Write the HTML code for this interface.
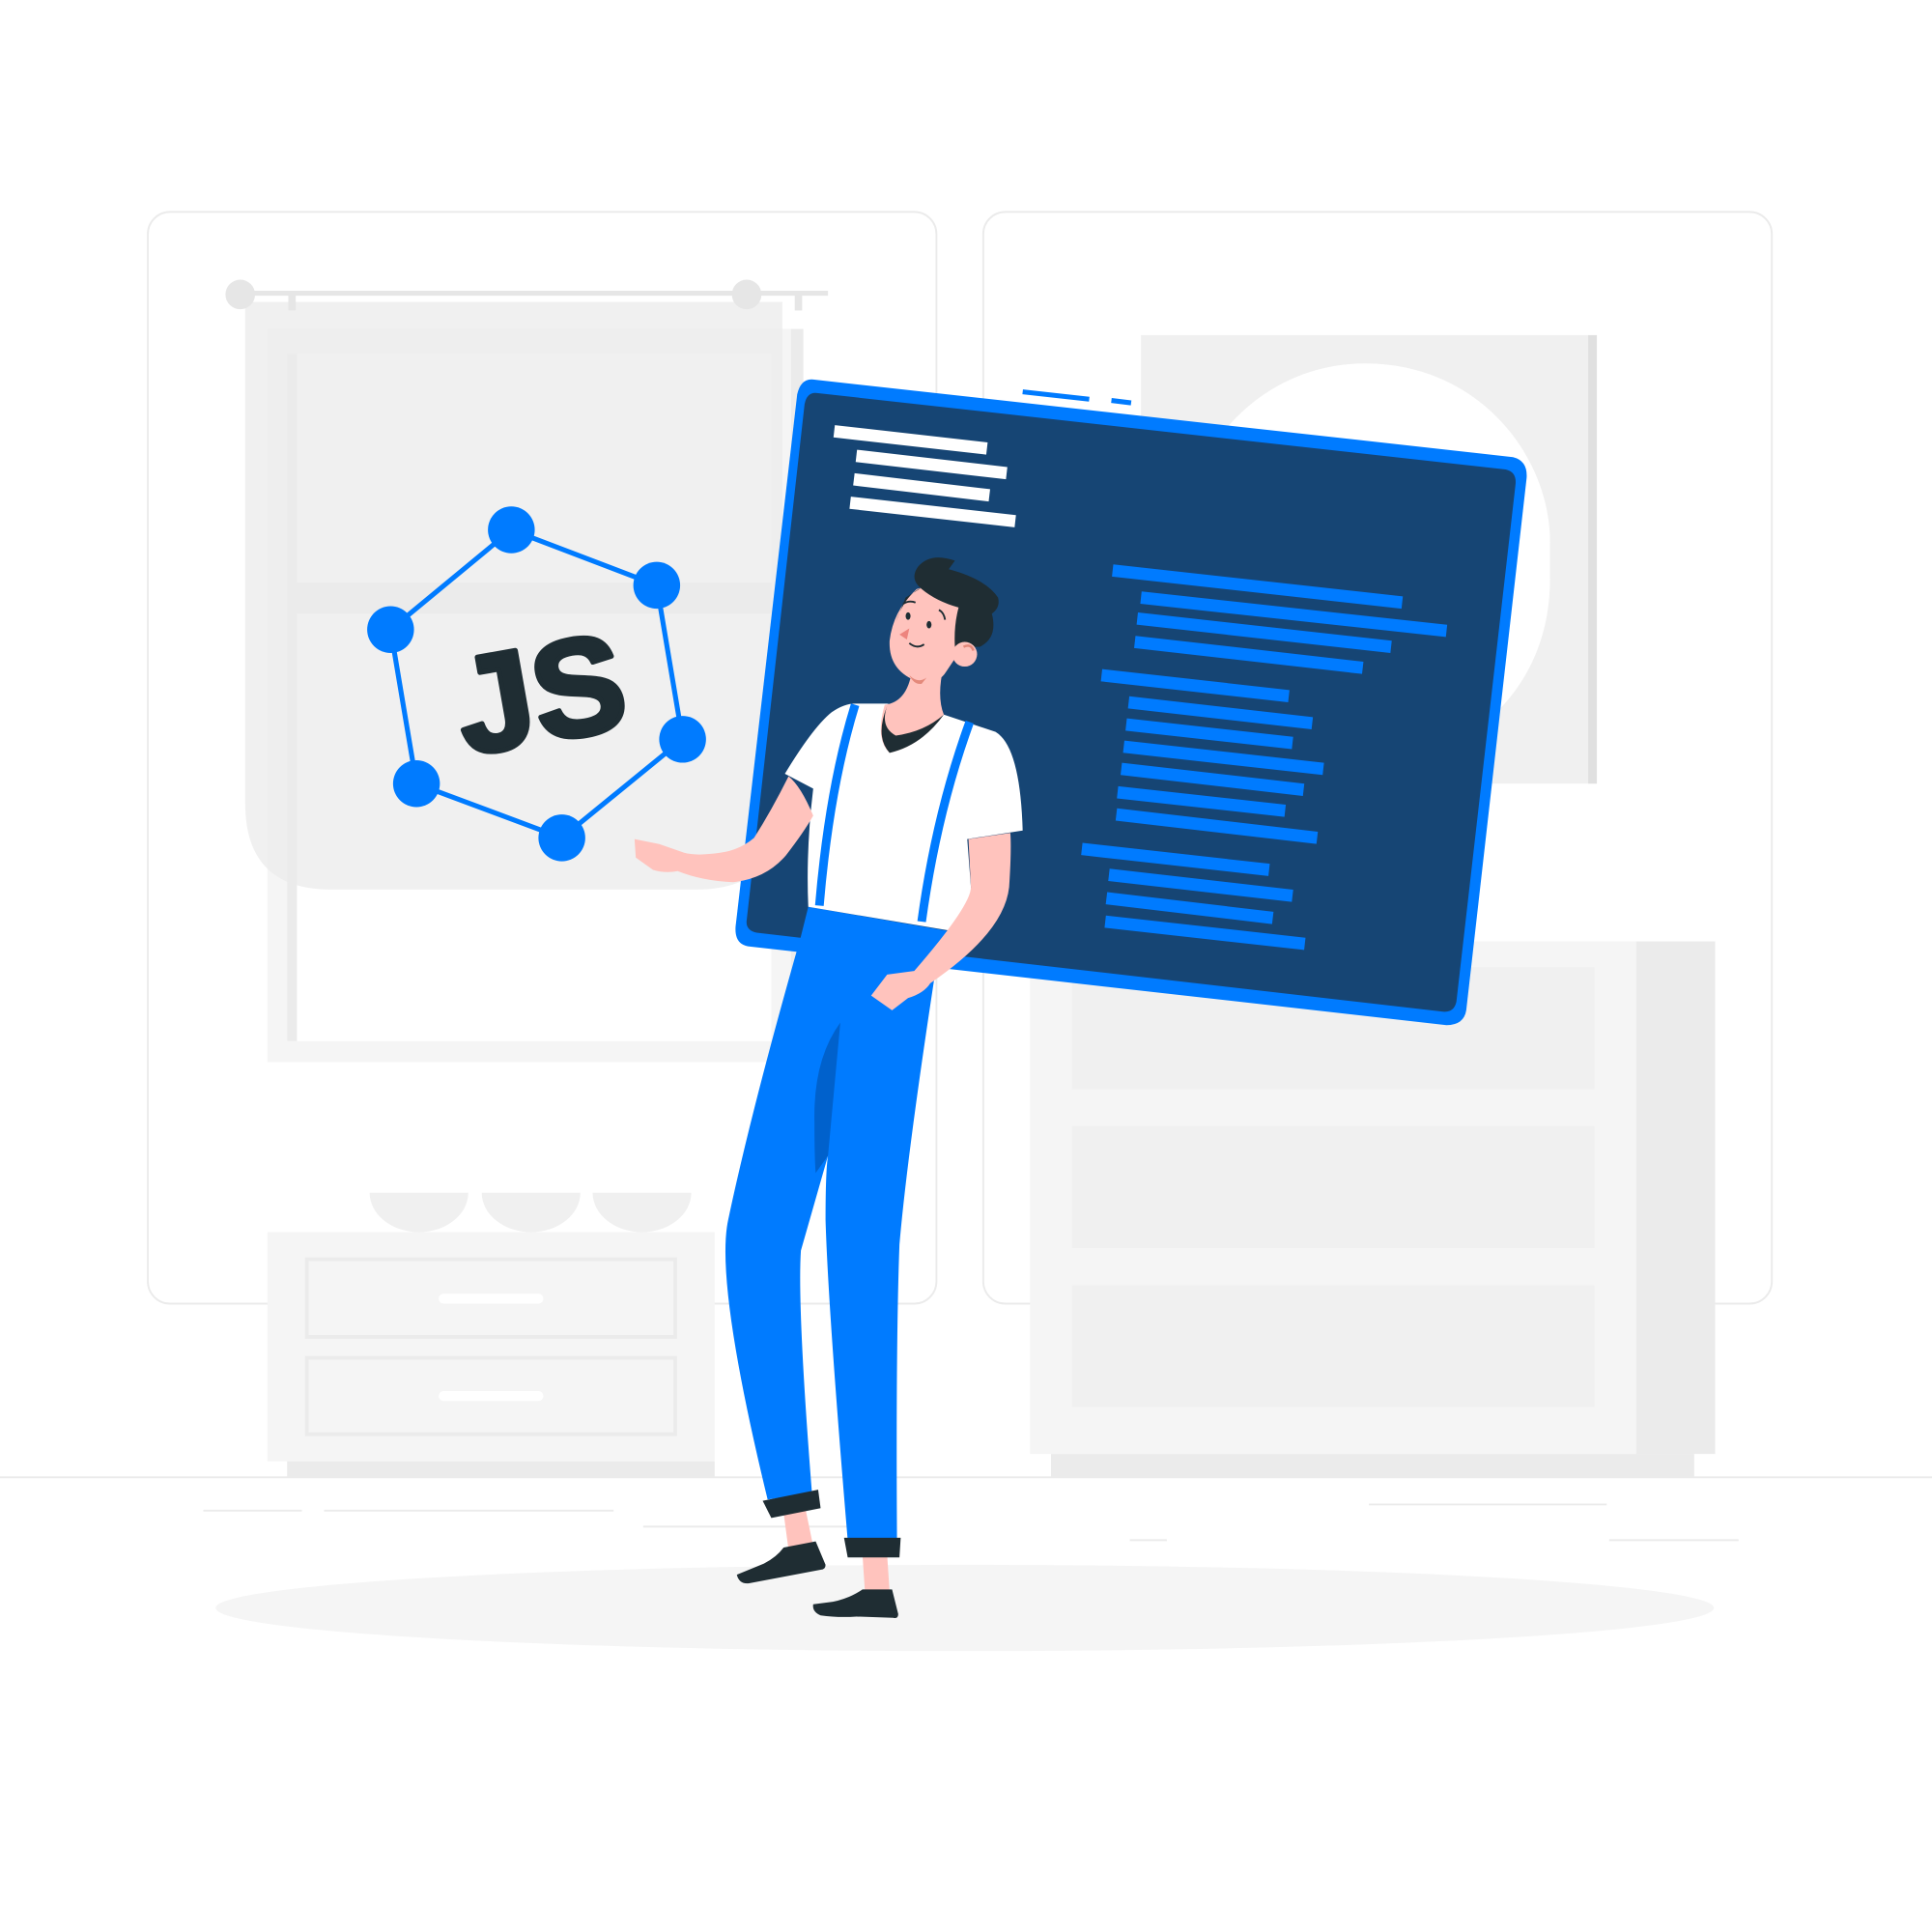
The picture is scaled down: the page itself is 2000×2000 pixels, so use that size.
<!DOCTYPE html>
<html><head><meta charset="utf-8"><style>html,body{margin:0;padding:0;background:#fff}svg{display:block}</style></head>
<body>
<svg width="2000" height="2000" viewBox="0 0 1568 1568" xmlns="http://www.w3.org/2000/svg">
<rect width="1568" height="1568" fill="#fff"/>
<rect x="120" y="172" width="640" height="886" rx="18" fill="#fff" stroke="#ebebeb" stroke-width="1.5"/>
<rect x="798" y="172" width="640" height="886" rx="18" fill="#fff" stroke="#ebebeb" stroke-width="1.5"/>
<rect x="217" y="267" width="435" height="595" fill="#f5f5f5"/>
<rect x="233" y="287" width="393" height="558" fill="#fff"/>
<rect x="233" y="287" width="8" height="558" fill="#ebebeb"/>
<rect x="642" y="267" width="10" height="595" fill="#ebebeb"/>
<rect x="233" y="473" width="393" height="25" fill="#ebebeb"/>
<path d="M199 245 H635 V652 Q635 722 565 722 H269 Q199 722 199 652 Z" fill="#ebebeb" opacity="0.75"/>
<line x1="190" y1="238" x2="672" y2="238" stroke="#e6e6e6" stroke-width="4"/>
<rect x="234" y="238" width="6" height="14" fill="#e6e6e6"/><rect x="645" y="238" width="6" height="14" fill="#e6e6e6"/>
<circle cx="195" cy="239" r="12" fill="#e6e6e6"/><circle cx="606" cy="239" r="12" fill="#e6e6e6"/>
<rect x="926" y="272" width="370" height="364" fill="#f0f0f0"/>
<rect x="1289" y="272" width="7" height="364" fill="#e0e0e0"/>
<clipPath id="cp"><rect x="926" y="272" width="363" height="364"/></clipPath>
<path d="M1108 295 C1200 295 1258 370 1258 440 V470 C1258 560 1190 620 1108 620 C1020 620 960 560 960 470 V440 C960 370 1020 295 1108 295 Z" fill="#fff" clip-path="url(#cp)"/>
<rect x="836" y="764" width="556" height="416" fill="#f5f5f5"/>
<rect x="1328" y="764" width="64" height="416" fill="#ebebeb"/>
<rect x="853" y="1180" width="522" height="19" fill="#ebebeb"/>
<rect x="870" y="785" width="424" height="99" fill="#f0f0f0"/>
<rect x="870" y="914" width="424" height="99" fill="#f0f0f0"/>
<rect x="870" y="1043" width="424" height="99" fill="#f0f0f0"/>
<path d="M300 968 A40 32 0 0 0 380 968 Z M391 968 A40 32 0 0 0 471 968 Z M481 968 A40 32 0 0 0 561 968 Z" fill="#f0f0f0"/>
<rect x="217" y="1000" width="363" height="186" fill="#f5f5f5"/>
<rect x="233" y="1186" width="347" height="13" fill="#ebebeb"/>
<rect x="249" y="1022" width="299" height="63" fill="none" stroke="#ebebeb" stroke-width="3"/>
<rect x="249" y="1102" width="299" height="62" fill="none" stroke="#ebebeb" stroke-width="3"/>
<line x1="360" y1="1054" x2="437" y2="1054" stroke="#fff" stroke-width="8" stroke-linecap="round"/>
<line x1="360" y1="1133" x2="437" y2="1133" stroke="#fff" stroke-width="8" stroke-linecap="round"/>
<line x1="0" y1="1199" x2="1568" y2="1199" stroke="#ebebeb" stroke-width="1.5"/>
<g stroke="#ebebeb" stroke-width="1.5">
<line x1="165" y1="1226" x2="245" y2="1226"/><line x1="263" y1="1226" x2="498" y2="1226"/>
<line x1="522" y1="1239" x2="700" y2="1239"/><line x1="1111" y1="1221" x2="1304" y2="1221"/>
<line x1="917" y1="1250" x2="947" y2="1250"/><line x1="1306" y1="1250" x2="1411" y2="1250"/></g>
<ellipse cx="783" cy="1305" rx="608" ry="35" fill="#f5f5f5"/>
<g stroke="#007bff" stroke-width="4" fill="none">
<polygon points="415,430 533,475 554,600 456,680 338,636 317,511"/></g>
<g fill="#007bff">
<circle cx="415" cy="430" r="19"/><circle cx="533" cy="475" r="19"/><circle cx="554" cy="600" r="19"/>
<circle cx="456" cy="680" r="19"/><circle cx="338" cy="636" r="19"/><circle cx="317" cy="511" r="19"/></g>
<text x="438" y="602" transform="rotate(-10 438 560)" text-anchor="middle" font-family="Liberation Sans, sans-serif" font-weight="bold" font-size="112" fill="#1f2d33" stroke="#1f2d33" stroke-width="4" stroke-linejoin="round">JS</text>
<path d="M660 308 L1228 371 Q1240 374 1239 388 L1190 820 Q1188 832 1174 832 L607 768 Q596 766 597 752 L647 320 Q650 307 660 308 Z" fill="#007bff"/>
<path d="M663 319 L1222 381 Q1231 383 1230 393 L1182 813 Q1180 822 1171 821 L614 757 Q605 755 606 747 L653 328 Q655 318 663 319 Z" fill="#164574"/>
<g stroke="#fff" stroke-width="10">
<line x1="677" y1="350" x2="801" y2="364"/><line x1="695" y1="370" x2="817" y2="384"/>
<line x1="693" y1="389" x2="803" y2="402"/><line x1="690" y1="408" x2="824" y2="423"/></g>
<g stroke="#007bff" stroke-width="10">
<line x1="903" y1="463" x2="1138" y2="489"/><line x1="926" y1="485" x2="1174" y2="512"/>
<line x1="923" y1="502" x2="1129" y2="525"/><line x1="921" y1="521" x2="1106" y2="542"/>
<line x1="894" y1="548" x2="1046" y2="565"/><line x1="916" y1="570" x2="1065" y2="587"/>
<line x1="914" y1="588" x2="1049" y2="603"/><line x1="912" y1="606" x2="1074" y2="624"/>
<line x1="910" y1="624" x2="1058" y2="641"/><line x1="907" y1="643" x2="1043" y2="658"/>
<line x1="906" y1="661" x2="1069" y2="680"/><line x1="878" y1="689" x2="1030" y2="706"/>
<line x1="900" y1="710" x2="1049" y2="727"/><line x1="898" y1="729" x2="1033" y2="745"/>
<line x1="897" y1="748" x2="1059" y2="766"/></g>
<g stroke="#007bff" stroke-width="4">
<line x1="830" y1="318" x2="884" y2="324"/><line x1="902" y1="325" x2="918" y2="327"/></g>
<path d="M636 1228 L654 1226 L660 1255 L640 1258 Z" fill="#ffc3bd"/>
<path d="M700 1262 L720 1262 L722 1292 L702 1292 Z" fill="#ffc3bd"/>
<path d="M636 1256 L662 1251 L670 1270 Q670 1274 666 1274 L608 1285 Q600 1286 598 1278 L620 1269 Q630 1264 636 1256 Z" fill="#1f2d33"/>
<path d="M700 1290 L724 1290 L729 1310 Q729 1314 725 1313 L695 1312 Q680 1313 666 1311 Q659 1308 660 1302 L676 1300 Q690 1297 700 1290 Z" fill="#1f2d33"/>
<path d="M656 736 L772 756 L758 796 Q736 940 730 1010 Q727 1090 728 1250 L688 1250 Q672 1060 670 990 Q670 950 672 938 L650 1015 Q647 1060 659 1212 L623 1217 Q580 1040 591 990 Q610 900 650 760 Z" fill="#007bff"/>
<path d="M682 830 Q660 860 661 910 Q661 940 662 952 L672 938 Z" fill="#0061cc"/>
<path d="M619 1218 L664 1209 L666 1224 L626 1232 Z" fill="#1f2d33"/>
<path d="M685 1248 L731 1248 L730 1264 L688 1264 Z" fill="#1f2d33"/>
<path d="M694 571 L720 571 Q735 575 766 580 L808 594 Q828 606 830 674 L785 681 L788 720 Q788 740 775 756 L656 736 Q654 690 660 640 L637 628 Q660 590 675 578 Q685 571 694 571 Z" fill="#fff"/>
<path d="M740 540 L766 540 Q760 565 766 580 Q748 605 722 611 Q710 600 718 572 Q736 570 740 545 Z" fill="#ffc3bd"/>
<path d="M720 573 Q714 590 727 597 Q750 594 766 580 Q748 605 722 611 Q710 598 720 573 Z" fill="#1f2d33"/>
<path d="M694 572 Q673 640 665 735" stroke="#007bff" stroke-width="7" fill="none"/>
<path d="M787 586 Q760 660 748 748" stroke="#007bff" stroke-width="7" fill="none"/>
<path d="M640 630 Q626 658 612 680 Q600 690 585 692 Q565 695 555 692 L535 685 L515 681 L516 696 L530 706 Q540 709 550 707 Q570 715 595 716 Q622 713 638 694 Q652 676 660 662 Q650 638 640 630 Z" fill="#ffc3bd"/>
<path d="M786 681 L788 720 Q788 735 742 788 L720 791 L707 808 L724 820 L737 810 Q750 806 755 798 Q815 757 819 720 Q821 690 820 676 Z" fill="#ffc3bd"/>
<path d="M744 478 Q725 495 722 520 Q721 543 742 552 Q760 558 768 545 L778 530 L792 520 Q800 490 790 480 Q770 470 744 478 Z" fill="#ffc3bd"/>
<path d="M738 548 Q745 555 752 550 L748 555 Q742 556 738 548 Z" fill="#e4897b"/>
<path d="M745 460 Q755 448 775 455 L770 462 Q800 470 810 485 Q812 493 805 498 Q810 518 795 525 L775 525 Q774 508 778 493 Q760 488 748 478 Q738 470 745 460 Z" fill="#1f2d33"/>
<path d="M748 477 Q735 482 727 505 L735 485 Z" fill="#1f2d33"/>
<circle cx="783" cy="531" r="10" fill="#ffc3bd"/>
<path d="M782 525 Q788 522 790 528" stroke="#e4897b" stroke-width="2" fill="none"/>
<path d="M738 510 L730 515 L736 519 Z" fill="#ed847e"/>
<ellipse cx="737" cy="500" rx="2" ry="3" fill="#1f2d33"/><ellipse cx="754" cy="507" rx="2" ry="3" fill="#1f2d33"/>
<path d="M733 490 Q738 487 743 489" stroke="#1f2d33" stroke-width="1.5" fill="none"/>
<path d="M762 495 Q766 497 767 503" stroke="#1f2d33" stroke-width="1.5" fill="none"/>
<path d="M738 522 Q744 527 750 523" stroke="#1f2d33" stroke-width="1.5" fill="none"/>
</svg>
</body></html>
